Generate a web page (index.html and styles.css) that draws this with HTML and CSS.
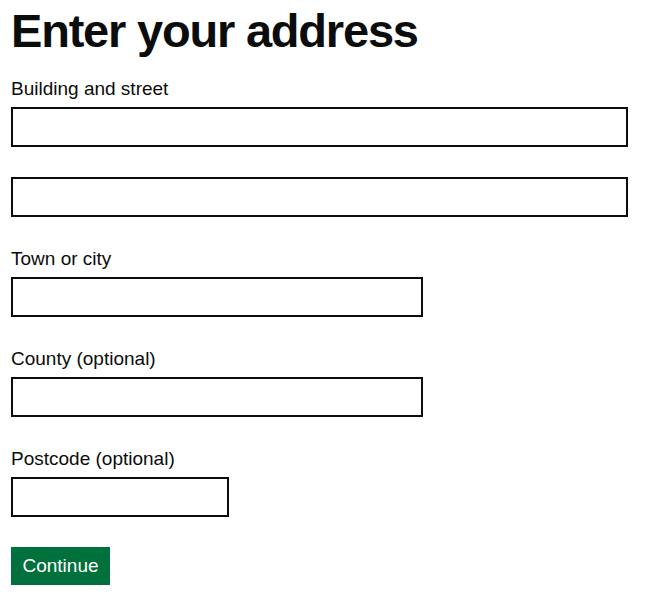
FILE: index.html
```html
<!DOCTYPE html>
<html lang="en">
<head>
<meta charset="utf-8">
<title>Enter your address</title>
<link rel="stylesheet" href="styles.css">
</head>
<body>
<main class="page">
  <form class="address-form">
    <h1 class="heading">Enter your address</h1>
    <div class="form-group">
      <label class="label" for="line1">Building and street</label>
      <input class="input input-full" id="line1" type="text">
    </div>
    <div class="form-group">
      <input class="input input-full" id="line2" type="text" aria-label="Building and street line 2">
    </div>
    <div class="form-group">
      <label class="label" for="town">Town or city</label>
      <input class="input input-two-thirds" id="town" type="text">
    </div>
    <div class="form-group">
      <label class="label" for="county">County (optional)</label>
      <input class="input input-two-thirds" id="county" type="text">
    </div>
    <div class="form-group">
      <label class="label" for="postcode">Postcode (optional)</label>
      <input class="input input-postcode" id="postcode" type="text">
    </div>
    <button class="button" type="submit">Continue</button>
  </form>
</main>
</body>
</html>
```
FILE: styles.css
```css
html, body {
  margin: 0;
  padding: 0;
  background: #ffffff;
}

body {
  font-family: "Liberation Sans", Arial, sans-serif;
  color: #0b0c0c;
}

.page {
  padding: 0 33px 0 11px;
}

.address-form {
  display: flex;
  flex-direction: column;
  align-items: flex-start;
}

.heading {
  margin: 3px 0 19px;
  font-size: 47px;
  line-height: 55px;
  font-weight: 700;
  letter-spacing: -1.2px;
}

.form-group {
  display: flex;
  flex-direction: column;
  align-items: flex-start;
  margin-bottom: 30px;
  width: 100%;
}

.label {
  font-size: 19px;
  line-height: 24px;
  margin-bottom: 6px;
}

.input {
  box-sizing: border-box;
  height: 40px;
  border: 2px solid #0b0c0c;
  border-radius: 0;
  padding: 5px;
  font-family: inherit;
  font-size: 19px;
  background: #fff;
  margin: 0;
}

.input-full {
  width: 617px;
}

.input-two-thirds {
  width: 412px;
}

.input-postcode {
  width: 218px;
}

.button {
  box-sizing: border-box;
  width: 99px;
  height: 38px;
  margin: 0;
  padding: 0 8px;
  border: 0;
  border-radius: 0;
  background: #00703c;
  box-shadow: 0 2px 0 #002d18;
  color: #ffffff;
  font-family: inherit;
  font-size: 19px;
  line-height: 38px;
  text-align: center;
}
```
